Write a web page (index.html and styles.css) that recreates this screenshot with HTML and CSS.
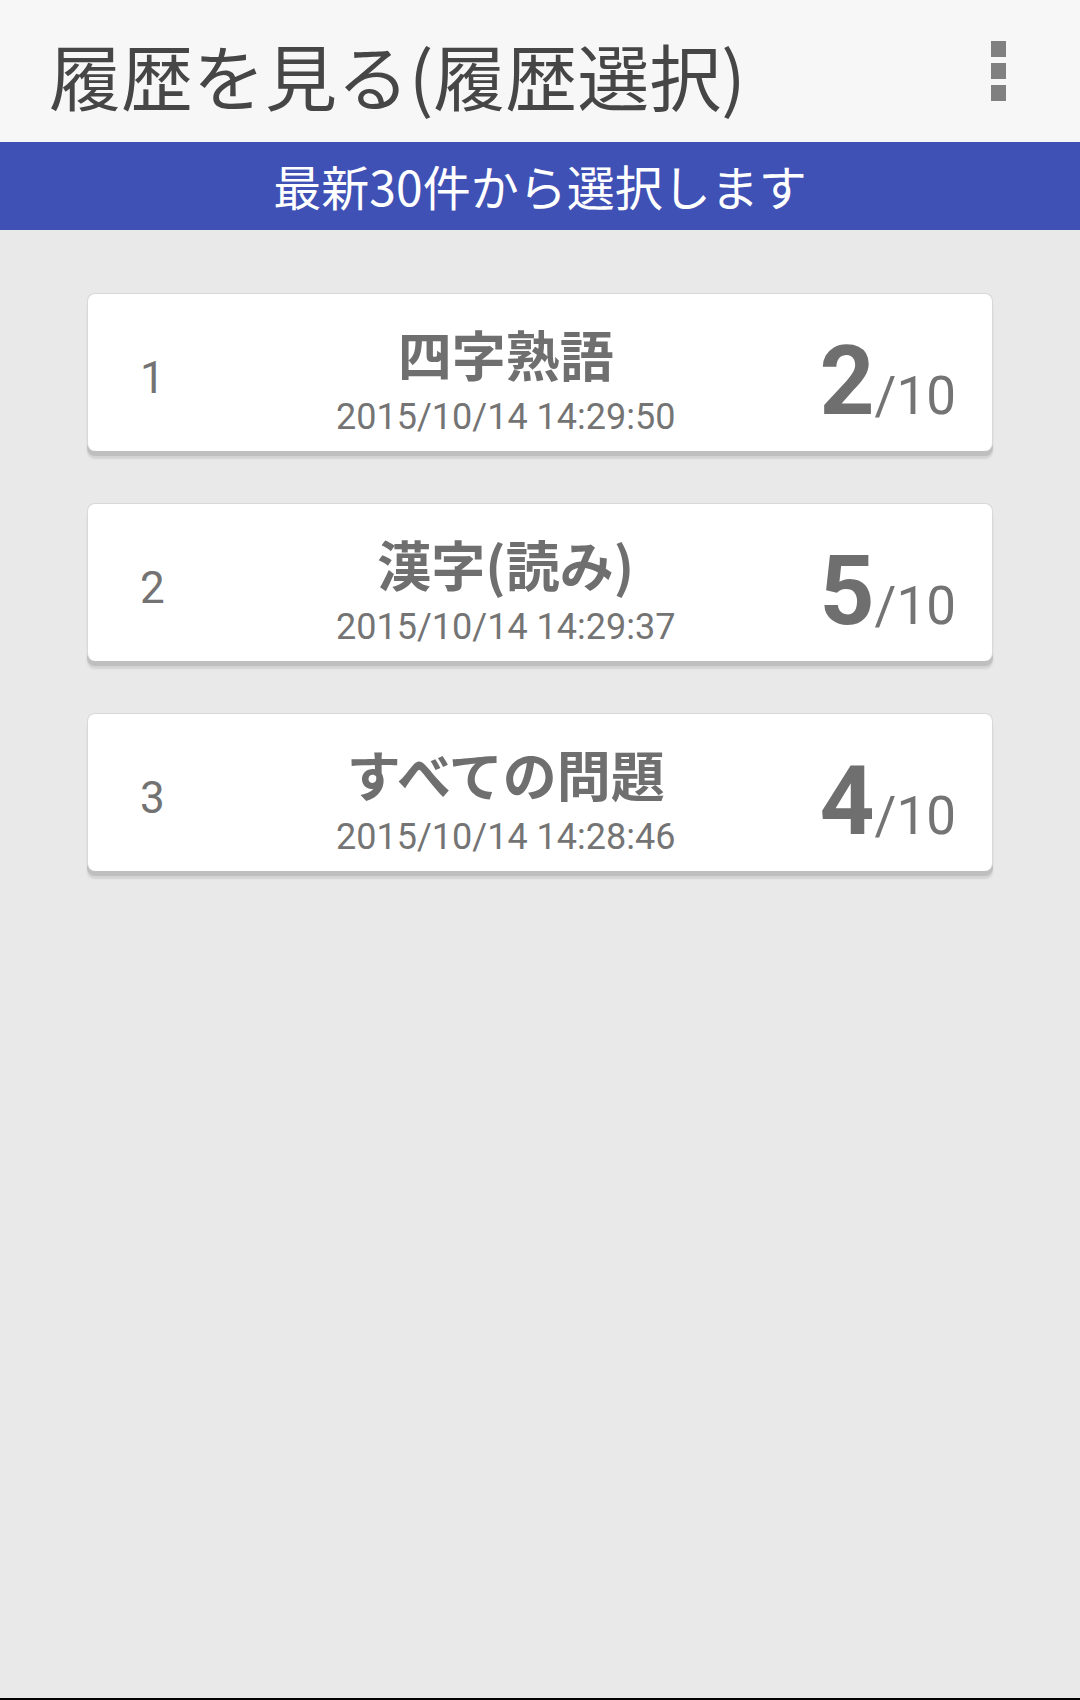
FILE: index.html
```html
<!DOCTYPE html>
<html lang="ja">
<head>
<meta charset="utf-8">
<title>履歴を見る(履歴選択)</title>
<link rel="stylesheet" href="styles.css">
</head>
<body>
<div class="app">
  <header class="appbar">
    <h1 class="appbar-title">履歴を見る(履歴選択)</h1>
    <div class="menu" aria-label="menu">
      <span class="dot"></span>
      <span class="dot"></span>
      <span class="dot"></span>
    </div>
  </header>
  <div class="subbar">最新30件から選択します</div>
  <main class="list">
    <div class="card">
      <div class="num">1</div>
      <div class="info">
        <div class="title">四字熟語</div>
        <div class="date">2015/10/14 14:29:50</div>
      </div>
      <div class="score"><span class="got">2</span><span class="total">/10</span></div>
    </div>
    <div class="card">
      <div class="num">2</div>
      <div class="info">
        <div class="title">漢字(読み)</div>
        <div class="date">2015/10/14 14:29:37</div>
      </div>
      <div class="score"><span class="got">5</span><span class="total">/10</span></div>
    </div>
    <div class="card">
      <div class="num">3</div>
      <div class="info">
        <div class="title">すべての問題</div>
        <div class="date">2015/10/14 14:28:46</div>
      </div>
      <div class="score"><span class="got">4</span><span class="total">/10</span></div>
    </div>
  </main>
  <div class="navedge"></div>
</div>
</body>
</html>
```

FILE: styles.css
```css
* { box-sizing: border-box; }
html, body {
  margin: 0;
  padding: 0;
}
body {
  font-family: Roboto, "Noto Sans CJK JP", sans-serif;
  background: #e9e9e9;
}
.app {
  width: 1080px;
  height: 1700px;
  display: flex;
  flex-direction: column;
}
.appbar {
  height: 142px;
  flex: none;
  background: #f7f7f7;
  display: flex;
  align-items: center;
  justify-content: space-between;
  padding: 6px 74px 0 49px;
}
.appbar-title {
  margin: 0;
  font-family: "Noto Sans CJK JP", sans-serif;
  font-weight: 400;
  font-size: 72px;
  line-height: 1;
  color: #464646;
}
.menu {
  display: flex;
  flex-direction: column;
  gap: 6px;
  margin-top: -6px;
}
.dot {
  display: block;
  width: 15px;
  height: 16px;
  background: #808080;
}
.subbar {
  height: 88px;
  flex: none;
  background: #3f51b5;
  color: #ffffff;
  font-family: "Noto Sans CJK JP", sans-serif;
  font-size: 48px;
  line-height: 86px;
  text-align: center;
}
.list {
  flex: 1;
  padding: 63px 87px 0;
  display: flex;
  flex-direction: column;
  gap: 52px;
}
.card {
  height: 158px;
  background: #ffffff;
  border: 1px solid #d8d8d8;
  border-bottom: none;
  border-radius: 8px;
  box-shadow: 0 5px 0 #bfbfbf, 0 8px 2px #d3d3d3;
  display: grid;
  grid-template-columns: 60px 1fr auto;
  align-items: center;
  padding: 16px 36px 0 52px;
  color: #737373;
}
.num {
  font-family: Roboto, sans-serif;
  font-size: 44px;
  margin-bottom: 6px;
}
.info {
  text-align: center;
  display: flex;
  flex-direction: column;
  align-items: center;
  margin-right: 8px;
}
.title {
  font-family: "Noto Sans CJK JP", sans-serif;
  font-weight: 700;
  font-size: 54px;
  line-height: 60px;
  color: #6f6f6f;
}
.date {
  font-family: Roboto, sans-serif;
  font-size: 36px;
  line-height: 42px;
  margin-top: 12px;
  color: #747474;
}
.score {
  display: flex;
  align-items: baseline;
  font-family: Roboto, sans-serif;
  line-height: 1;
  color: #6f6f6f;
}
.got {
  font-size: 96px;
  font-weight: 700;
}
.total {
  font-size: 53px;
  font-weight: 400;
  color: #747474;
}
.navedge {
  height: 2px;
  flex: none;
  background: #000000;
}
```
